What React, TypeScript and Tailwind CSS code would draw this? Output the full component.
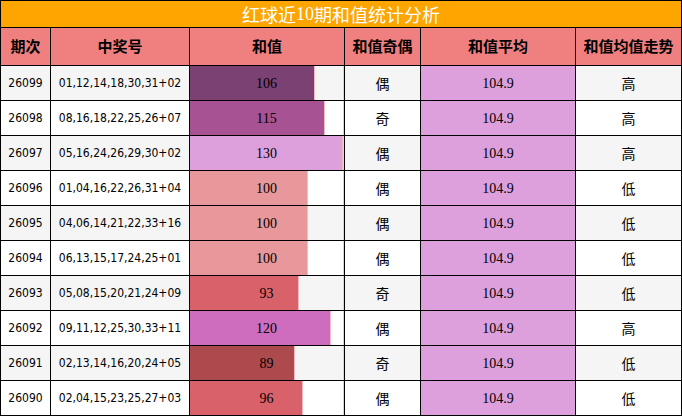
const rows = [
    { issue: "26099", nums: "01,12,14,18,30,31+02", sum: 106, color: "bg-[#7b4173]", parity: "偶", trend: "高" },
    { issue: "26098", nums: "08,16,18,22,25,26+07", sum: 115, color: "bg-[#a65293]", parity: "奇", trend: "高" },
    { issue: "26097", nums: "05,16,24,26,29,30+02", sum: 130, color: "bg-[#dda0dd]", parity: "偶", trend: "高" },
    { issue: "26096", nums: "01,04,16,22,26,31+04", sum: 100, color: "bg-[#e8979a]", parity: "偶", trend: "低" },
    { issue: "26095", nums: "04,06,14,21,22,33+16", sum: 100, color: "bg-[#e8979a]", parity: "偶", trend: "低" },
    { issue: "26094", nums: "06,13,15,17,24,25+01", sum: 100, color: "bg-[#e8979a]", parity: "偶", trend: "低" },
    { issue: "26093", nums: "05,08,15,20,21,24+09", sum: 93, color: "bg-[#d9626a]", parity: "奇", trend: "低" },
    { issue: "26092", nums: "09,11,12,25,30,33+11", sum: 120, color: "bg-[#ce6cbe]", parity: "偶", trend: "高" },
    { issue: "26091", nums: "02,13,14,16,20,24+05", sum: 89, color: "bg-[#ad4a4d]", parity: "奇", trend: "低" },
    { issue: "26090", nums: "02,04,15,23,25,27+03", sum: 96, color: "bg-[#d9626a]", parity: "偶", trend: "低" },
];

const headers = ["期次", "中奖号", "和值", "和值奇偶", "和值平均", "和值均值走势"];
const cjk = "font-['Noto_Sans_CJK_SC',sans-serif]";
const sans = "font-['DejaVu_Sans_Condensed','DejaVu_Sans',sans-serif]";
const serif = "font-['Liberation_Serif',serif]";

export default function App() {
    return (
        <div className="w-[682px] h-[416px] bg-white">
            <div className="grid grid-cols-[49px_138px_154px_75px_154px_105px] grid-rows-[26px_37px_repeat(10,34px)] gap-px p-px bg-black text-black">
                <div className={`col-span-6 bg-[#ffa500] flex items-center justify-center text-white text-[18px] leading-none ${cjk}`}>
                    红球近<span className={serif}>10</span>期和值统计分析
                </div>
                {headers.map((h) => (
                    <div key={h} className={`bg-[#f08080] flex items-center justify-center text-[15px] font-bold ${cjk}`}>
                        {h}
                    </div>
                ))}
                {rows.map((r, i) => {
                    const bg = i % 2 === 0 ? "bg-[#f5f5f5]" : "bg-white";
                    return (
                        <div key={r.issue} className="contents">
                            <div className={`${bg} flex items-center justify-center text-[12px] ${sans}`}>{r.issue}</div>
                            <div className={`${bg} flex items-center justify-center text-[12px] ${sans}`}>{r.nums}</div>
                            <div className={`${bg} relative border-r border-[#f5c6cc]`}>
                                <div
                                    className={`${r.color} h-full border-r border-[#f3b8c2]`}
                                    style={{ width: `${(r.sum / 130) * 100}%` }}
                                />
                                <span className={`absolute inset-0 flex items-center justify-center text-[14px] ${serif}`}>
                                    {r.sum}
                                </span>
                            </div>
                            <div className={`${bg} flex items-center justify-center text-[14px] ${cjk}`}>{r.parity}</div>
                            <div className={`bg-[#dda0dd] flex items-center justify-center text-[14px] ${serif}`}>104.9</div>
                            <div className={`${bg} flex items-center justify-center text-[14px] ${cjk}`}>{r.trend}</div>
                        </div>
                    );
                })}
            </div>
        </div>
    );
}
